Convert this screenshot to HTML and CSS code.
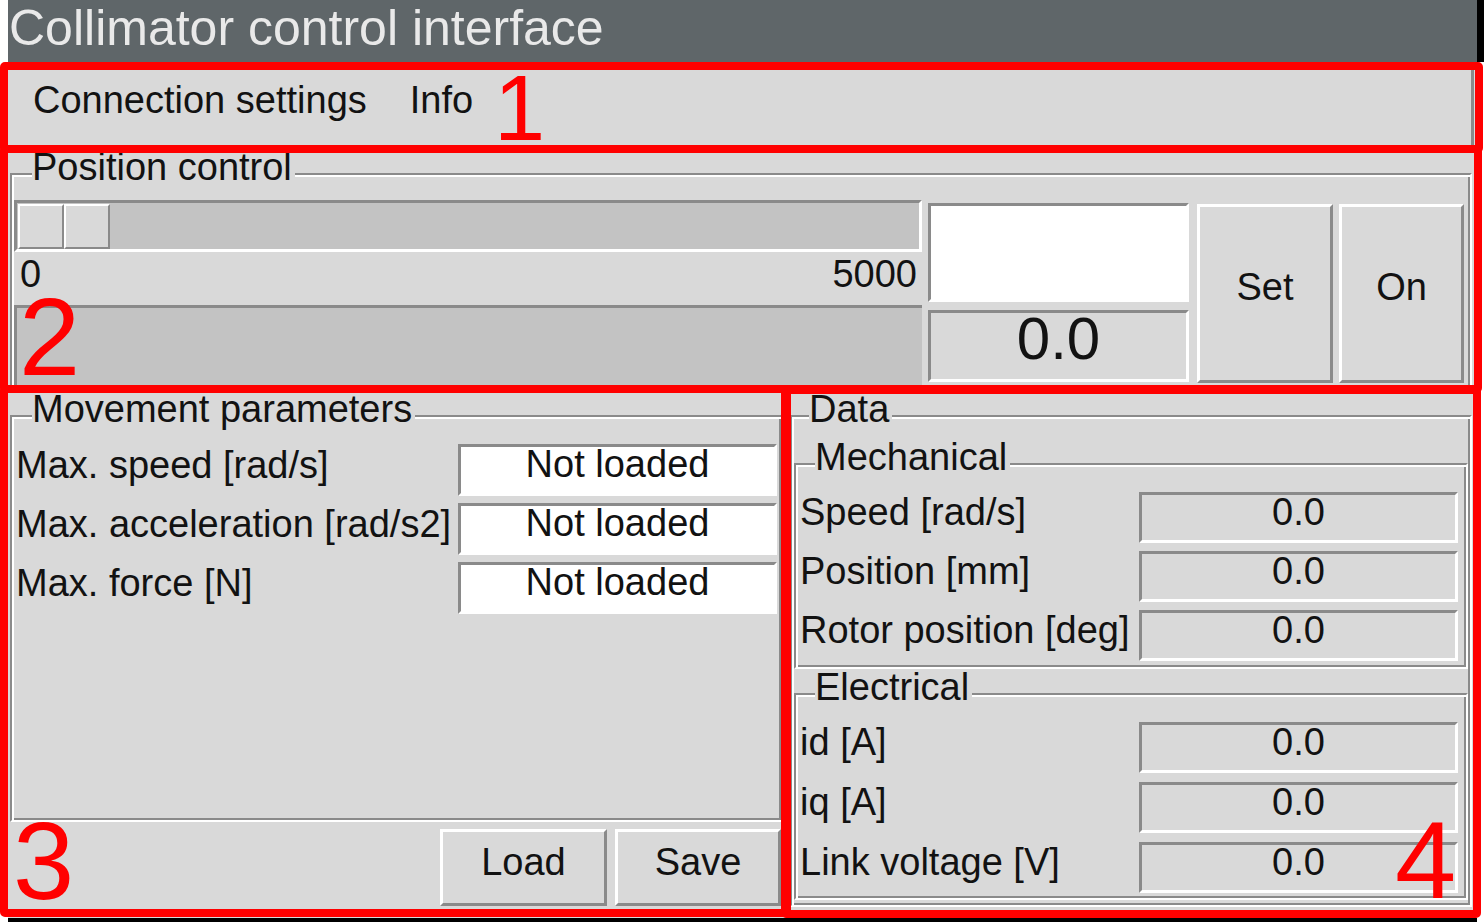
FILE: index.html
```html
<!DOCTYPE html>
<html lang="en">
<head>
<meta charset="utf-8">
<title>Collimator control interface</title>
<link rel="stylesheet" href="styles.css">
</head>
<body>
<div class="app">
  <div class="titlebar"><span class="title-text">Collimator control interface</span></div>
  <div class="content">
    <div class="menubar">
      <span class="menu-item">Connection settings</span>
      <span class="menu-item">Info</span>
    </div>

    <div class="lf lf-pc">
      <div class="lf-title">Position control</div>
      <div class="pc-body">
        <div class="pc-left">
          <div class="trough">
            <span class="slider-half"></span><span class="slider-half"></span>
          </div>
          <div class="scale-labels"><span>0</span><span>5000</span></div>
          <div class="progress"></div>
        </div>
        <div class="pc-mid">
          <div class="sunken entry-big"></div>
          <div class="sunken readout">0.0</div>
        </div>
        <div class="btn btn-tall btn-set">Set</div>
        <div class="btn btn-tall btn-on">On</div>
      </div>
    </div>

    <div class="lower">
      <div class="mov-col">
        <div class="lf lf-mov">
          <div class="lf-title">Movement parameters</div>
          <div class="rows rows-mov">
            <div class="row"><span class="row-label">Max. speed [rad/s]</span><span class="sunken field">Not loaded</span></div>
            <div class="row"><span class="row-label">Max. acceleration [rad/s2]</span><span class="sunken field">Not loaded</span></div>
            <div class="row"><span class="row-label">Max. force [N]</span><span class="sunken field">Not loaded</span></div>
          </div>
        </div>
        <div class="btn-row">
          <div class="btn btn-short btn-load">Load</div>
          <div class="btn btn-short btn-save">Save</div>
        </div>
      </div>

      <div class="lf lf-data">
        <div class="lf-title">Data</div>
        <div class="lf lf-sub lf-mech">
          <div class="lf-title">Mechanical</div>
          <div class="rows rows-mech">
            <div class="row row-data"><span class="row-label">Speed [rad/s]</span><span class="sunken value">0.0</span></div>
            <div class="row row-data"><span class="row-label">Position [mm]</span><span class="sunken value">0.0</span></div>
            <div class="row row-data"><span class="row-label">Rotor position [deg]</span><span class="sunken value">0.0</span></div>
          </div>
        </div>
        <div class="lf lf-sub lf-elec">
          <div class="lf-title">Electrical</div>
          <div class="rows rows-elec">
            <div class="row row-data"><span class="row-label">id [A]</span><span class="sunken value">0.0</span></div>
            <div class="row row-data"><span class="row-label">iq [A]</span><span class="sunken value">0.0</span></div>
            <div class="row row-data"><span class="row-label">Link voltage [V]</span><span class="sunken value">0.0</span></div>
          </div>
        </div>
      </div>
    </div>
  </div>
</div>

<div class="anno anno-box anno-box-1"></div>
<div class="anno anno-box anno-box-2"></div>
<div class="anno anno-box anno-box-3"></div>
<div class="anno anno-box anno-box-4"></div>
<div class="anno anno-num anno-num-1">1</div>
<div class="anno anno-num anno-num-2">2</div>
<div class="anno anno-num anno-num-3">3</div>
<div class="anno anno-num anno-num-4">4</div>
</body>
</html>
```

FILE: styles.css
```css
* { box-sizing: border-box; }

body {
  margin: 0;
  background: #ffffff;
  font-family: "Liberation Sans", Arial, sans-serif;
  color: #121212;
}

.app {
  width: 1476px;
  margin-left: 8px;
}

.titlebar {
  height: 62px;
  background: #5f6669;
  border-right: 7px solid #000;
  color: #e9e9e9;
  font-size: 50px;
  line-height: 56px;
  padding-left: 1px;
  white-space: nowrap;
}

.title-text {
  display: inline-block;
  line-height: 56px;
}

.content {
  width: 1469px;
  height: 860px;
  background: #d9d9d9;
  border-bottom: 4px solid #000;
  font-size: 38px;
  line-height: 34px;
}

.menubar {
  height: 88px;
  margin-right: 3px;
  border-right: 3px solid #8a8a8a;
  border-bottom: 3px solid #8a8a8a;
  display: flex;
  gap: 43px;
  padding: 21px 0 0 25px;
  white-space: nowrap;
}

/* Tk style groove labelframe */
.lf {
  border: 2px solid;
  border-color: #8a8a8a #ffffff #ffffff #8a8a8a;
  box-shadow: inset 2px 2px 0 #ffffff, inset -2px -2px 0 #8a8a8a;
  padding: 2px;
}

.lf-title {
  width: max-content;
  height: 34px;
  margin-top: -27px;
  padding-right: 3px;
  background: #d9d9d9;
  white-space: nowrap;
}

.sunken {
  border: 3px solid;
  border-color: #8a8a8a #ffffff #ffffff #8a8a8a;
}

.btn {
  flex: none;
  border: 3px solid;
  border-color: #ffffff #8a8a8a #8a8a8a #ffffff;
  background: #d9d9d9;
  text-align: center;
}

/* Position control */
.lf-pc {
  width: 1462px;
  margin: 23px 0 0 2px;
}
.lf-pc > .lf-title { margin-left: 18px; }

.pc-body {
  display: flex;
  align-items: flex-start;
  height: 189px;
  margin-top: 16px;
}

.pc-left {
  flex: none;
  width: 908px;
}

.trough {
  display: flex;
  height: 52px;
  padding: 1px 0 0 1px;
  background: #c3c3c3;
  border: 3px solid;
  border-color: #8a8a8a #ffffff #ffffff #8a8a8a;
}

.slider-half {
  width: 46px;
  height: 45px;
  background: #d9d9d9;
  border: 2px solid;
  border-color: #ffffff #8a8a8a #8a8a8a #ffffff;
}

.scale-labels {
  display: flex;
  justify-content: space-between;
  height: 53px;
  padding: 5px 5px 0 6px;
}

.progress {
  height: 84px;
  background: #c3c3c3;
  border-top: 3px solid #8a8a8a;
  border-left: 3px solid #8a8a8a;
}

.pc-mid {
  flex: none;
  width: 261px;
  margin: 3px 0 0 6px;
}

.entry-big {
  height: 99px;
  background: #ffffff;
}

.readout {
  height: 72px;
  margin-top: 8px;
  font-size: 60px;
  line-height: 52px;
  text-align: center;
}

.btn-tall {
  height: 179px;
  margin-top: 4px;
  padding-top: 63px;
}
.btn-set { width: 136px; margin-left: 8px; }
.btn-on { width: 125px; margin-left: 6px; }

/* Lower area */
.lower {
  display: flex;
  align-items: flex-start;
  margin-top: 22px;
  padding-left: 2px;
}

.mov-col {
  flex: none;
  width: 773px;
}

.lf-mov { height: 407px; }
.lf-mov > .lf-title { margin-left: 18px; }

.rows {
  display: flex;
  flex-direction: column;
  margin-top: 18px;
}
.rows-mov { gap: 7px; }

.row {
  display: flex;
  justify-content: space-between;
  height: 52px;
}

.row-label {
  padding: 4px 0 0 2px;
  white-space: nowrap;
}

.field {
  width: 319px;
  height: 52px;
  margin-right: 2px;
  background: #ffffff;
  text-align: center;
}

.btn-row {
  display: flex;
  justify-content: flex-end;
  gap: 8px;
  margin-top: 7px;
  padding-right: 2px;
}
.btn-short { height: 77px; padding-top: 13px; }
.btn-load { width: 167px; }
.btn-save { width: 166px; }

.lf-data {
  flex: none;
  width: 682px;
  margin-left: 7px;
}
.lf-data > .lf-title { margin-left: 15px; }
.lf-sub > .lf-title { margin-left: 17px; }

.lf-mech { margin-top: 37px; }
.lf-elec { margin-top: 24px; margin-bottom: 3px; }

.rows-mech { gap: 8px; margin-bottom: 4px; }
.rows-elec { gap: 9px; margin-bottom: 3px; }

.row-data { height: 51px; }
.row-data .row-label { padding-top: 3px; }

.value {
  width: 319px;
  height: 51px;
  margin-right: 6px;
  text-align: center;
}

/* Red annotations drawn over the screenshot */
.anno { position: absolute; }

.anno-box {
  border: 8px solid #ff0000;
  border-radius: 5px;
}
.anno-box-1 { left: 0; top: 62px; width: 1483px; height: 91px; }
.anno-box-2 { left: 0; top: 145px; width: 1482px; height: 248px; }
.anno-box-3 { left: 0; top: 385px; width: 791px; height: 532px; }
.anno-box-4 { left: 781px; top: 386px; width: 700px; height: 532px; }

.anno-num {
  color: #ff0000;
  font-family: "Liberation Sans", Arial, sans-serif;
  font-size: 110px;
  line-height: 110px;
}
.anno-num-1 { left: 494px; top: 62px; font-size: 92px; line-height: 92px; }
.anno-num-2 { left: 19px; top: 282px; }
.anno-num-3 { left: 13px; top: 806px; }
.anno-num-4 { left: 1395px; top: 805px; }
```
